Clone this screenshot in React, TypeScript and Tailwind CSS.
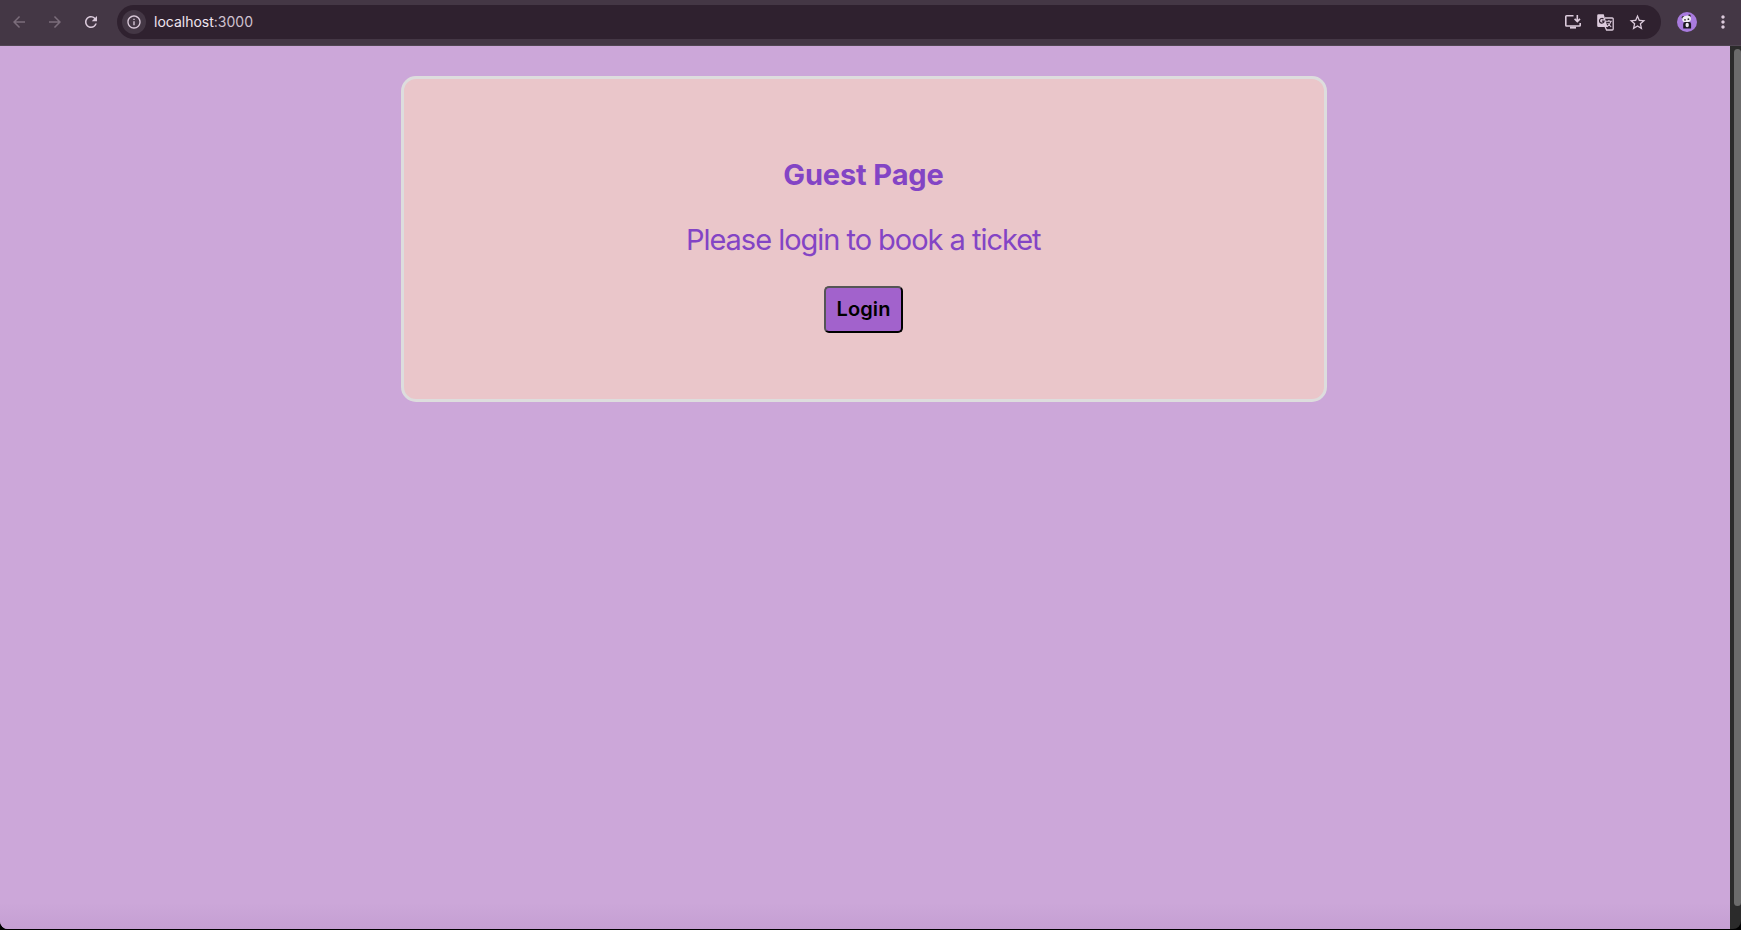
import React from "react";
import {
  MdArrowBack,
  MdArrowForward,
  MdInfoOutline,
  MdMoreVert,
  MdRefresh,
  MdStarBorder,
} from "react-icons/md";

function InstallIcon() {
  return (
    <svg width="16" height="16" viewBox="0 0 16 16" fill="none" stroke="currentColor" strokeWidth="1.6">
      <path d="M8.5 1.8H1.6a.8.8 0 0 0-.8.8v8.6a.8.8 0 0 0 .8.8h12.8a.8.8 0 0 0 .8-.8V9" />
      <path d="M12.3 1v6.2M9.6 4.9l2.7 2.7L15 4.9" />
      <path d="M5 13.6h6" strokeWidth="2" />
    </svg>
  );
}

function TranslateIcon() {
  return (
    <svg width="17" height="17" viewBox="0 0 17 17" fill="none">
      <path d="M8 4h7.2a1 1 0 0 1 1 1v10a1 1 0 0 1-1 1H9.6L8 12.5" stroke="currentColor" strokeWidth="1.3" />
      <path d="M9 7.2h5.8M11.9 6v1.2M14 7.4q-1 3.2-4 5.3M10.6 9l3.6 4" stroke="currentColor" strokeWidth="1.1" />
      <path d="M1.5.3h5.2L10.6 13H1.5A1.3 1.3 0 0 1 .2 11.700V1.600A1.300 1.300 0 0 1 1.500.3z" fill="currentColor" />
      <path d="M6.500 5.200a2.300 2.300 0 1 0 .6 1.900H4.900" stroke="#2f212f" strokeWidth="1.2" />
    </svg>
  );
}

function Avatar() {
  return (
    <svg width="20" height="20" viewBox="0 0 20 20">
      <circle cx="10" cy="10" r="10" fill="#a97bdf" />
      <circle cx="6.2" cy="5.6" r="1.5" fill="#222" />
      <circle cx="12.4" cy="3.9" r="1.3" fill="#222" />
      <ellipse cx="9.6" cy="7" rx="4.4" ry="3.3" fill="#f1edf3" transform="rotate(-10 9.600 7)" />
      <circle cx="8" cy="7.8" r=".9" fill="#333" />
      <circle cx="11.4" cy="7.2" r=".9" fill="#333" />
      <path d="M6.200 16.500V12q0-2 2-2h3.900q2 0 2 2v4.500z" fill="#1b1820" />
      <ellipse cx="10.2" cy="13" rx="1.7" ry="2.3" fill="#eee8f2" />
    </svg>
  );
}

function Toolbar() {
  return (
    <header className="flex h-[46px] shrink-0 items-start border-b border-[#514653] bg-[#443745] pt-[5px] text-[#dccbdc]">
      <div className="flex h-[34px] w-[117px] items-center pl-[10px] text-[#7b6d7b]">
        <MdArrowBack size={18} />
        <MdArrowForward size={18} className="ml-[18px]" />
        <MdRefresh size={18} className="ml-[18px] text-[#dccbdc]" />
      </div>
      <div className="flex h-[34px] w-[1544px] items-center rounded-full bg-[#2f212f] pr-[14.5px] pl-[5px]">
        <div className="flex size-6 items-center justify-center rounded-full bg-[#443745]">
          <MdInfoOutline size={16} />
        </div>
        <span className="ml-2 text-[14px] leading-5 text-[#d0c2d0]">
          <span className="text-[#f0e5f0]">localhost</span>:3000
        </span>
        <div className="ml-auto flex items-center">
          <InstallIcon />
          <div className="ml-[15.5px]">
            <TranslateIcon />
          </div>
          <MdStarBorder size={19} className="ml-[14px]" />
        </div>
      </div>
      <div className="ml-4 flex h-[34px] items-center">
        <Avatar />
        <MdMoreVert size={20} className="ml-4" />
      </div>
    </header>
  );
}

export default function App() {
  return (
    <div className="flex h-[930px] w-[1741px] flex-col overflow-hidden bg-black font-['Inter',sans-serif]">
      <Toolbar />
      <div className="flex h-[883px] overflow-hidden rounded-b-[8px]">
        <main className="flex w-[1730px] flex-col items-center bg-[#cca7d9] bg-linear-to-b from-[#cca7d9] from-97% to-[#c59fd3] pt-[30px]">
          <section className="mr-[2px] flex h-[326px] w-[926px] flex-col items-center rounded-[15px] border-3 border-[#dddddd] bg-[#eac6ca] pt-[78px] text-[#8344c5]">
            <h1 className="mr-px text-[29px] leading-[36px] font-bold tracking-[-0.12px]">Guest Page</h1>
            <p className="mt-[29px] mr-[1.5px] text-[29px] leading-[36px] tracking-[-1.03px]">
              Please login to book a ticket
            </p>
            <button className="mt-[28px] mr-px h-[47px] w-[79px] rounded-[5px] border-2 border-t-[#555] border-r-black border-b-black border-l-[#555] bg-[#a262cc] pb-px text-[20px] font-semibold tracking-[0.1px] text-black">
              Login
            </button>
          </section>
        </main>
        <div className="w-[11px] bg-[#2b2b2b] pt-[3px] pl-1">
          <div className="h-[857px] w-[7px] rounded-[4px] bg-[#6b6b6b]" />
        </div>
      </div>
    </div>
  );
}
